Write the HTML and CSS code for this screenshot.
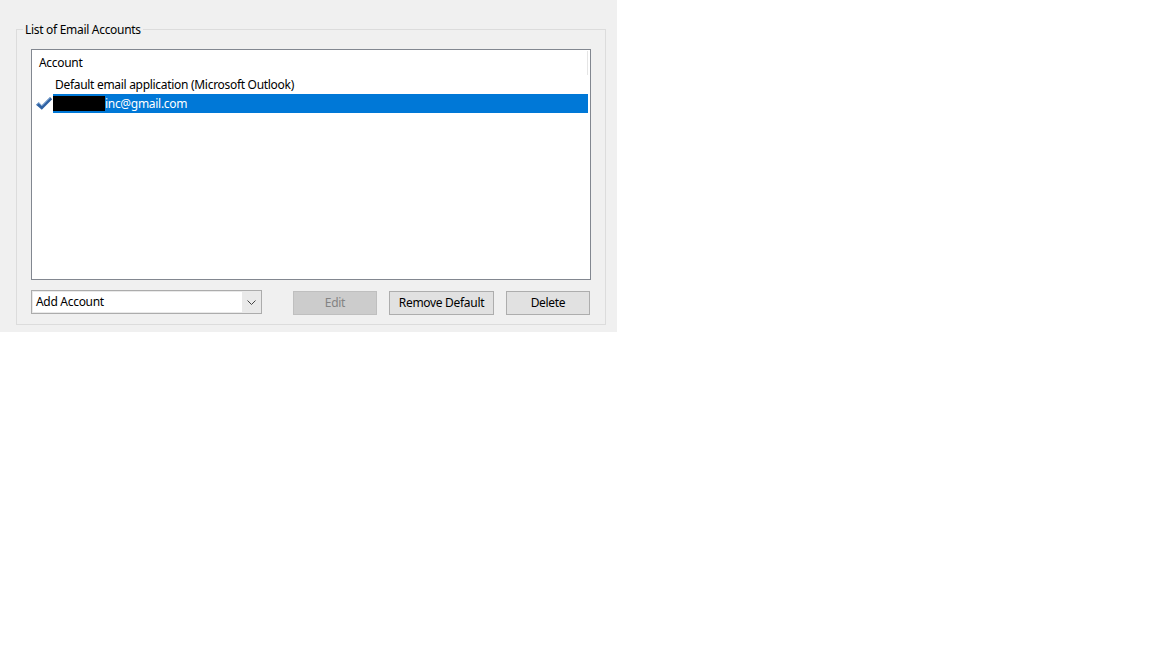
FILE: index.html
```html
<!DOCTYPE html>
<html>
<head>
<meta charset="utf-8">
<link rel="stylesheet" href="styles.css">
</head>
<body>
<div class="panel">
  <fieldset class="group">
    <legend class="legend">List of Email Accounts</legend>
    <div class="list">
      <div class="header">Account<span class="divider"></span></div>
      <div class="row"><span class="text">Default email application (Microsoft Outlook)</span></div>
      <div class="row selected">
        <svg class="check" width="18" height="15" viewBox="0 0 18 15">
          <path d="M1 8.8 L3.8 6.3 L6.8 9.3 L15 1 L17.2 3.2 L6.8 13.8 Z" fill="#2f62a3"/>
          <path d="M1.6 8.6 L3.8 6.9 L6.8 9.9 L15 1.7" fill="none" stroke="#8fb3de" stroke-width="0.9"/>
        </svg>
        <span class="sel"><span class="redact"></span>inc@gmail.com</span>
      </div>
    </div>
    <div class="controls">
      <div class="combo">
        <span class="combo-text">Add Account</span>
        <span class="combo-arrow">
          <svg width="9" height="5" viewBox="0 0 9 5"><path d="M0.5 0.5 L4.5 4.5 L8.5 0.5" fill="none" stroke="#444" stroke-width="1"/></svg>
        </span>
      </div>
      <button class="btn disabled">Edit</button>
      <button class="btn wide">Remove Default</button>
      <button class="btn">Delete</button>
    </div>
  </fieldset>
</div>
</body>
</html>
```

FILE: styles.css
```css
html, body {
  margin: 0;
  padding: 0;
  background: #ffffff;
}
body {
  font-family: "Noto Sans", "Open Sans", sans-serif;
  font-size: 12px;
  letter-spacing: -0.3px;
  color: #000;
}
.panel {
  width: 617px;
  height: 332px;
  background: #f0f0f0;
  box-sizing: border-box;
  padding: 21px 11px 0 16px;
}
.group {
  margin: 0;
  border: 1px solid #dcdcdc;
  padding: 12px 14px 9px 14px;
  height: 304px;
  width: 590px;
  box-sizing: border-box;
  min-width: 0;
}
.legend {
  padding: 2px 2px 0 2px;
  margin-left: -8px;
  line-height: 14px;
  font-size: 12px;
}
.list {
  height: 231px;
  background: #fff;
  border: 1px solid #828790;
  box-sizing: border-box;
  position: relative;
}
.header {
  height: 25px;
  line-height: 26px;
  padding-left: 7px;
  position: relative;
}
.divider {
  position: absolute;
  right: 2px;
  top: 1px;
  width: 1px;
  height: 24px;
  background: #e5e5e5;
}
.row {
  height: 19px;
  line-height: 18px;
  display: flex;
  align-items: center;
  padding-left: 21px;
  position: relative;
}
.row .text {
  padding-left: 2px;
}
.row.selected {
  padding-left: 3px;
}
.check {
  flex: none;
  margin-top: -1px;
}
.sel {
  flex: 1;
  background: #0078d7;
  color: #fff;
  height: 19px;
  line-height: 19px;
  margin-right: 2px;
  display: flex;
  align-items: center;
}
.redact {
  display: inline-block;
  width: 52px;
  height: 15px;
  background: #000;
}
.controls {
  display: flex;
  align-items: flex-start;
  margin-top: 10px;
}
.combo {
  width: 231px;
  height: 24px;
  border: 1px solid #acacac;
  box-sizing: border-box;
  background: #e9e9e9;
  display: flex;
  padding: 1px;
}
.combo-text {
  flex: 1;
  background: #fff;
  line-height: 20px;
  padding-left: 3px;
  margin-right: 1px;
}
.combo-arrow {
  width: 17px;
  display: flex;
  align-items: center;
  justify-content: center;
}
.btn {
  font-family: inherit;
  font-size: 12px;
  letter-spacing: -0.3px;
  height: 24px;
  width: 84px;
  margin-left: 12px;
  margin-top: 1px;
  background: #e1e1e1;
  border: 1px solid #adadad;
  padding: 0 0 2px 0;
  color: #000;
  box-sizing: border-box;
}
.btn.disabled {
  margin-left: 31px;
  background: #cccccc;
  border-color: #bfbfbf;
  color: #838383;
}
.btn.wide {
  width: 105px;
}
```
